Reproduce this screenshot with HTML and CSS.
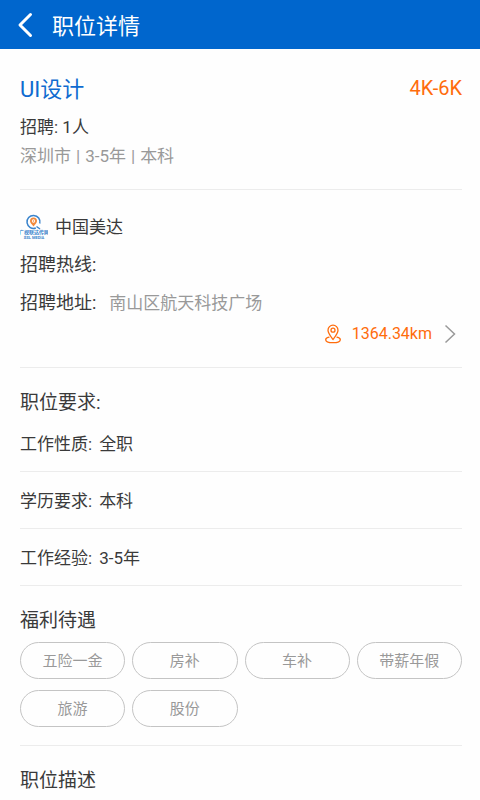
FILE: index.html
```html
<!DOCTYPE html>
<html lang="zh-CN">
<head>
<meta charset="utf-8">
<meta name="viewport" content="width=device-width, initial-scale=1">
<title>职位详情</title>
<link rel="stylesheet" href="styles.css">
</head>
<body>
<header class="topbar">
  <button class="back" type="button" aria-label="返回">
    <svg width="16" height="26" viewBox="0 0 16 26" fill="none" stroke="currentColor" stroke-width="3" stroke-linecap="round" stroke-linejoin="round"><path d="M13.500 2.500 3 13l10.500 10.500"/></svg>
  </button>
  <h1 class="topbar-title">职位详情</h1>
</header>
<main class="page">
  <section class="section">
    <div class="job-head">
      <h2 class="job-name">UI设计</h2>
      <span class="salary">4K-6K</span>
    </div>
    <p class="text-line">招聘: 1人</p>
    <p class="text-line meta"><span>深圳市</span><span>|</span><span>3-5年</span><span>|</span><span>本科</span></p>
  </section>

  <section class="section company">
    <div class="company-row company-name">
      <svg class="logo" width="28" height="26" viewBox="0 0 28 26" role="img" aria-label="公司标志">
        <path d="M15.800 14A6.500 6.500 0 1 1 19.800 9.500" fill="none" stroke="#3a84cc" stroke-width="1.500"/>
        <path d="m16.500 12.500 3.500 2.500" fill="none" stroke="#3a84cc" stroke-width="1.500"/>
        <path d="M13.500 12.500C11.500 10 10 8.800 10 7a3.500 3.500 0 0 1 7 0c0 1.800-1.500 3-3.500 5.500Z" fill="#f28a3c"/>
        <circle cx="13.500" cy="7" r="1.700" fill="#fff"/>
        <circle cx="13.500" cy="7" r=".8" fill="#f28a3c"/>
        <text class="logo-name" x="14" y="20" text-anchor="middle">广视联达传网</text>
        <text class="logo-sub" x="14" y="25" text-anchor="middle">SSL MEDIA</text>
      </svg>
      <span>中国美达</span>
    </div>
    <div class="company-row">招聘热线:</div>
    <div class="company-row">招聘地址:<span class="address">南山区航天科技广场</span></div>
    <a class="distance" href="#map">
      <svg width="18" height="20" viewBox="0 0 18 20" fill="none" stroke="currentColor" stroke-width="1.300" stroke-linecap="round" stroke-linejoin="round"><path d="M9 15.500C6 11.500 4 9 4 6.200a5 5 0 0 1 10 0C14 9 12 11.500 9 15.500Z"/><circle cx="9" cy="6.200" r="2"/><path d="M5 13.200c-2 .5-3.300 1.300-3.300 2.500 0 1.700 3.300 3 7.300 3s7.300-1.300 7.300-3c0-1.200-1.300-2-3.300-2.500"/></svg>
      <span>1364.34km</span>
      <svg class="chevron" width="12" height="20" viewBox="0 0 12 20" fill="none" stroke="currentColor" stroke-width="1.500"><path d="m1.500 1.500 9 8.500-9 8.500"/></svg>
    </a>
  </section>

  <section class="requirements">
    <h2 class="heading">职位要求:</h2>
    <ul class="req-list">
      <li class="req"><span>工作性质:</span><span>全职</span></li>
      <li class="req"><span>学历要求:</span><span>本科</span></li>
      <li class="req"><span>工作经验:</span><span>3-5年</span></li>
    </ul>
  </section>

  <section class="section benefits">
    <h2 class="heading">福利待遇</h2>
    <ul class="tags">
      <li class="tag">五险一金</li>
      <li class="tag">房补</li>
      <li class="tag">车补</li>
      <li class="tag">带薪年假</li>
      <li class="tag">旅游</li>
      <li class="tag">股份</li>
    </ul>
  </section>

  <section class="description">
    <h2 class="heading">职位描述</h2>
  </section>
</main>
</body>
</html>
```
FILE: styles.css
```css
* {
  box-sizing: border-box;
}

body,
h1,
h2,
p,
ul {
  margin: 0;
  padding: 0;
}

ul {
  list-style: none;
}

body {
  background: #fefefe;
  color: #3a3a3a;
  font-family: Roboto, "Noto Sans CJK SC", sans-serif;
  font-size: 17px;
}

h1,
h2 {
  font-weight: 400;
}

.topbar {
  display: flex;
  align-items: center;
  gap: 19px;
  height: 49px;
  padding: 0 18px 0 17px;
  background: #0066cd;
  color: #fff;
}

.back {
  display: flex;
  padding: 0;
  border: 0;
  background: none;
  color: inherit;
}

.topbar-title {
  padding-top: 4px;
  font-size: 22px;
  line-height: 30px;
}

.page {
  padding: 0 18px 0 20px;
}

.section {
  padding-bottom: 18px;
  border-bottom: 1px solid #ececec;
}

.job-head {
  display: flex;
  justify-content: space-between;
  padding-top: 24px;
  margin-bottom: 8px;
  line-height: 30px;
}

.job-name {
  padding-top: 2px;
  color: #0f6bd0;
  font-size: 22px;
}

.salary {
  color: #ff6c0c;
  font-size: 20px;
}

.text-line {
  line-height: 29px;
}

.meta {
  display: flex;
  gap: 5px;
  color: #999;
}

.company {
  padding-top: 18px;
  padding-bottom: 21px;
}

.company-row {
  display: flex;
  align-items: center;
  font-size: 18px;
  line-height: 38px;
}

.company-name {
  gap: 7px;
  font-size: 17px;
}

.logo-name {
  fill: #3a84cc;
  font-size: 5px;
  font-weight: 700;
}

.logo-sub {
  fill: #3a84cc;
  font-size: 4px;
  font-weight: 700;
}

.address {
  margin-left: 13px;
  color: #999;
  font-size: 17px;
}

.distance {
  display: flex;
  align-items: center;
  justify-content: flex-end;
  gap: 10px;
  padding-right: 6px;
  color: #ff6c0c;
  font-size: 16px;
  line-height: 24px;
  text-decoration: none;
}

.chevron {
  margin-left: 2px;
  color: #999;
}

.heading {
  padding-top: 22px;
  font-size: 19px;
  line-height: 25px;
}

.req {
  display: flex;
  gap: 7px;
  padding-top: 3px;
  border-bottom: 1px solid #ececec;
  line-height: 53px;
}

.tags {
  display: grid;
  grid-template-columns: repeat(4, 1fr);
  gap: 11px 7px;
  margin-top: 9px;
}

.tag {
  padding-top: 2px;
  border: 1px solid #c4c4c4;
  border-radius: 19px;
  color: #999;
  font-size: 15px;
  line-height: 33px;
  text-align: center;
}
```
